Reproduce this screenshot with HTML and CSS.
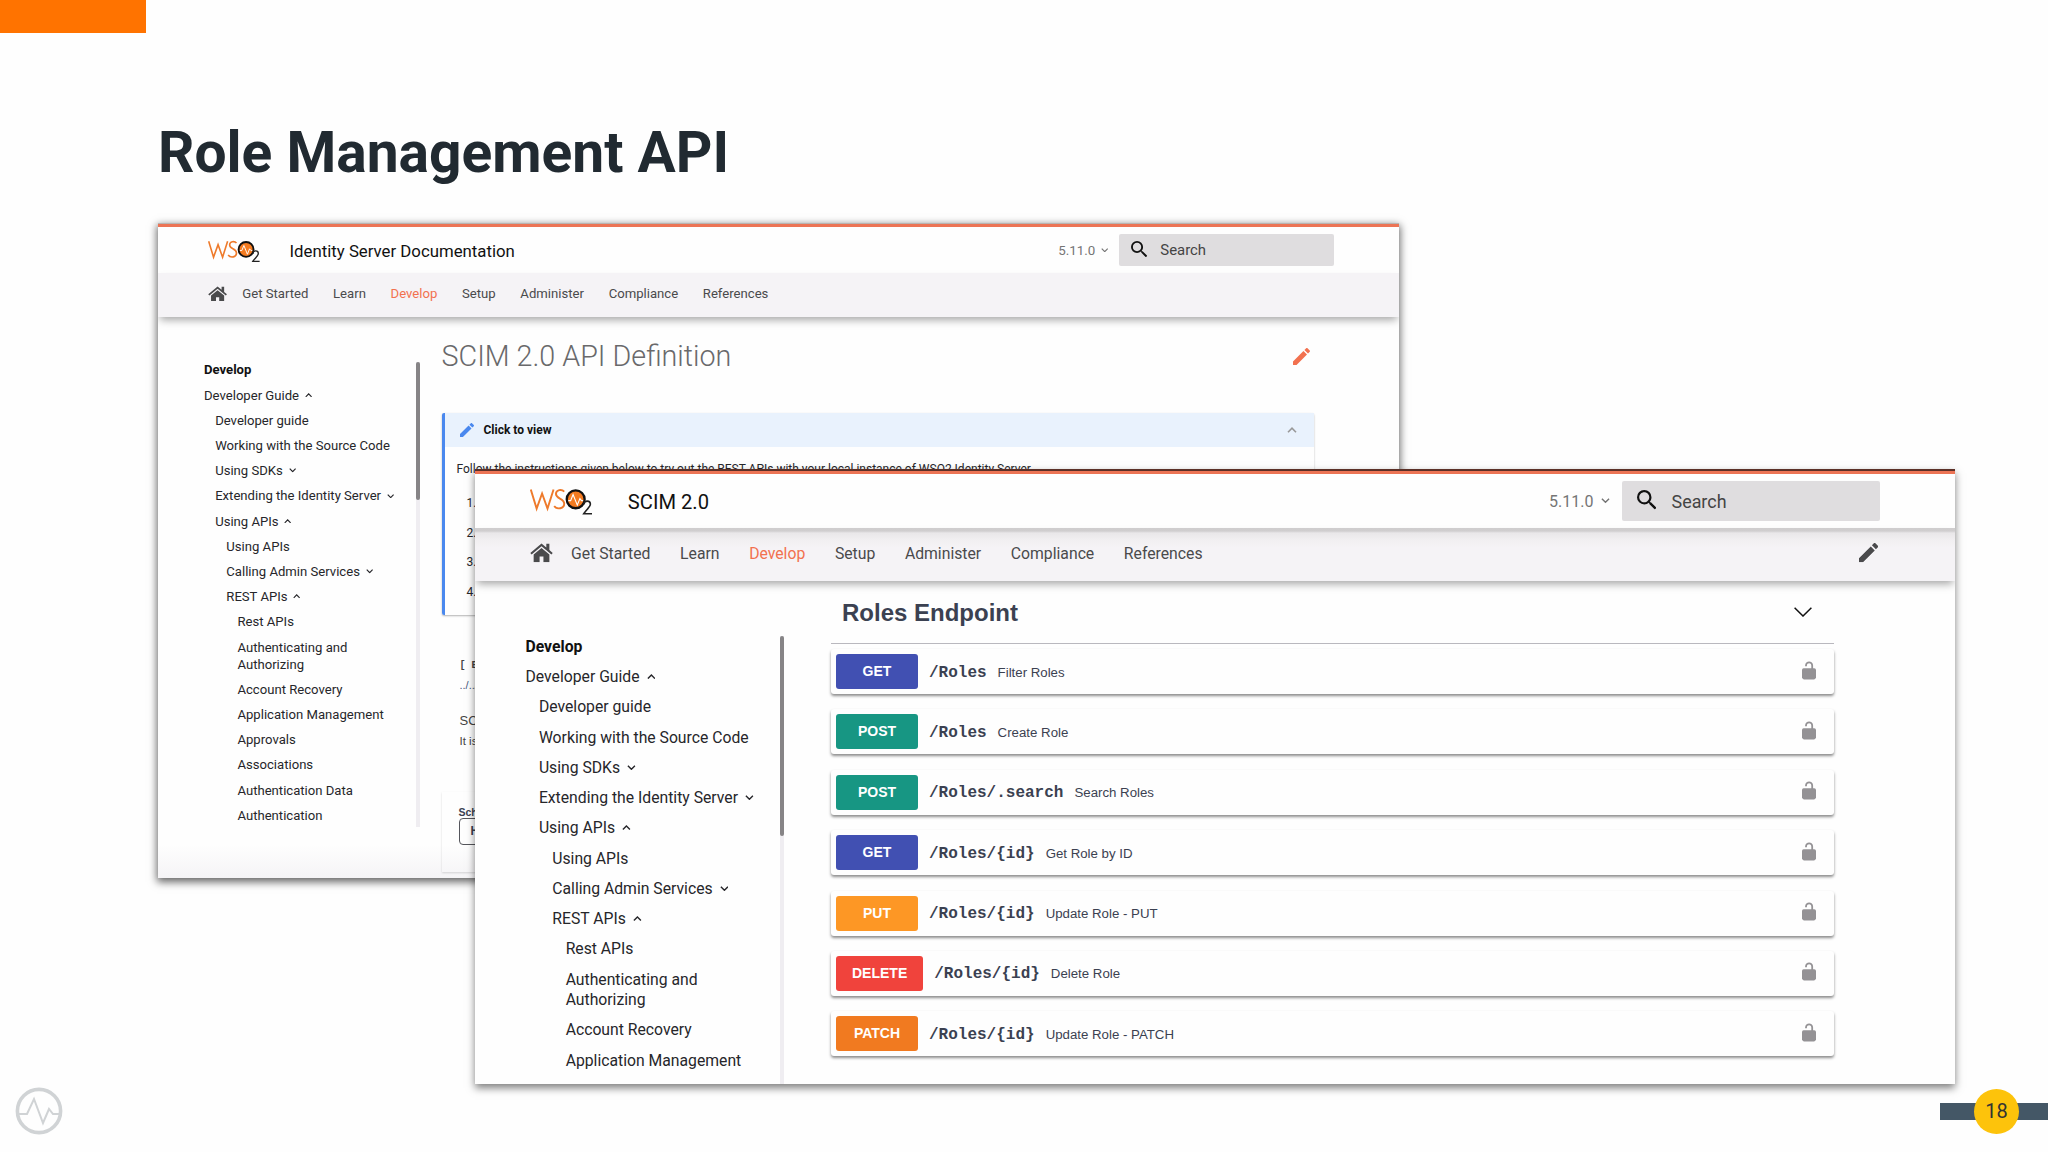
FILE: index.html
```html
<!DOCTYPE html>
<html lang="en">
<head>
    <meta charset="UTF-8">
    <title>Role Management API</title>
    <link rel="stylesheet" href="styles.css">
</head>
<body>
    <!-- shared icons -->
    <svg class="defs" width="0" height="0">
        <symbol id="logo" viewBox="0 0 62 27">
            <g fill="none" stroke="#ee7a2b" stroke-width="1.9">
                <path d="M0.8 1.5L6.6 20.5L12 5.5L17.4 20.5L23.4 1.5"/>
                <path d="M34 3.6C31.5 0.8 25.8 1.6 25.8 6C25.8 11 34 10 34 15.6C34 20.6 27 21.8 24 18"/>
            </g>
            <circle cx="45.4" cy="11.2" r="8.9" fill="#f47b20" stroke="#111" stroke-width="2.3"/>
            <path d="M38 12.5h2.4l2.4-6l4.2 10.5l2.6-6.5l1.6 2h1.6" fill="none" stroke="#fff" stroke-width="1.1"/>
            <path d="M53.6 16.2C54 11.8 60 12.2 60 16C60 19 56 21.5 53.4 25.6H61.6" fill="none" stroke="#222" stroke-width="1.6"/>
        </symbol>
        <symbol id="home" viewBox="0 0 24 20">
            <path d="M12 0.5L0.3 10.4L1.7 12L12 3.4L22.3 12L23.7 10.4L20.2 7.4V0.8H17V4.7Z"/>
            <path d="M12 5.2L3.8 12V20H10V14H14V20H20.2V12Z"/>
        </symbol>
        <symbol id="pencil" viewBox="3 3 18 18">
            <path d="M20.71 7.04c.39-.39.39-1.04 0-1.41l-2.34-2.34c-.37-.39-1.02-.39-1.41 0l-1.84 1.83 3.75 3.75M3 17.25V21h3.75L17.81 9.93l-3.75-3.75L3 17.25z"/>
        </symbol>
        <symbol id="magnifier" viewBox="3 3 17.5 17.5">
            <path d="M9.5 3A6.5 6.5 0 0 1 16 9.5c0 1.61-.59 3.09-1.56 4.23l.27.27h.79l5 5-1.5 1.5-5-5v-.79l-.27-.27A6.516 6.516 0 0 1 9.5 16 6.5 6.5 0 0 1 3 9.5 6.5 6.5 0 0 1 9.5 3m0 2C7 5 5 7 5 9.5S7 14 9.5 14 14 12 14 9.5 12 5 9.5 5z"/>
        </symbol>
        <symbol id="down" viewBox="0 0 10 6">
            <path d="M1 0.8L5 4.8L9 0.8" fill="none" stroke="currentColor" stroke-width="1.6"/>
        </symbol>
        <symbol id="up" viewBox="0 0 10 6">
            <path d="M1 5.2L5 1.2L9 5.2" fill="none" stroke="currentColor" stroke-width="1.6"/>
        </symbol>
        <symbol id="lock" viewBox="0 0 14 19">
            <path d="M2 7.3H9.3V4.6C9.3 1.6 4.9 1.6 4.9 4.6V5.2H3.1V4.4C3.1 -0.9 11.1 -0.9 11.1 4.4V7.3H12.2A1.8 1.8 0 0 1 14 9.1V17L12.2 18.6H1.8L0 17V9.1A1.8 1.8 0 0 1 2 7.3Z"/>
        </symbol>
    </svg>

    <div class="accent"></div>
    <h1 class="slide-title">Role Management API</h1>

    <div class="window window-back">
        <header class="topbar">
            <svg class="logo"><use href="#logo"/></svg>
            <span class="product">Identity Server Documentation</span>
            <span class="version">5.11.0 <svg class="chev"><use href="#down"/></svg></span>
            <div class="search"><svg><use href="#magnifier"/></svg><span>Search</span></div>
        </header>
        <nav class="tabs">
            <svg class="home"><use href="#home"/></svg>
            <a>Get Started</a><a>Learn</a><a class="active">Develop</a><a>Setup</a><a>Administer</a><a>Compliance</a><a>References</a>
        </nav>
        <div class="content">
            <ul class="sidebar">
                <li class="head">Develop</li>
                <li>Developer Guide <svg class="chev"><use href="#up"/></svg></li>
                <li class="l1">Developer guide</li>
                <li class="l1">Working with the Source Code</li>
                <li class="l1">Using SDKs <svg class="chev"><use href="#down"/></svg></li>
                <li class="l1">Extending the Identity Server <svg class="chev"><use href="#down"/></svg></li>
                <li class="l1">Using APIs <svg class="chev"><use href="#up"/></svg></li>
                <li class="l2">Using APIs</li>
                <li class="l2">Calling Admin Services <svg class="chev"><use href="#down"/></svg></li>
                <li class="l2">REST APIs <svg class="chev"><use href="#up"/></svg></li>
                <li class="l3">Rest APIs</li>
                <li class="l3">Authenticating and<br>Authorizing</li>
                <li class="l3">Account Recovery</li>
                <li class="l3">Application Management</li>
                <li class="l3">Approvals</li>
                <li class="l3">Associations</li>
                <li class="l3">Authentication Data</li>
                <li class="l3">Authentication</li>
            </ul>
            <div class="scrollbar"><div class="thumb"></div></div>
            <main class="article">
                <div class="article-head">
                    <h2>SCIM 2.0 API Definition</h2>
                    <svg class="pencil"><use href="#pencil"/></svg>
                </div>
                <div class="note">
                    <div class="note-title">
                        <svg class="pencil"><use href="#pencil"/></svg>
                        <span>Click to view</span>
                        <svg class="chev"><use href="#up"/></svg>
                    </div>
                    <p>Follow the instructions given below to try out the REST APIs with your local instance of WSO2 Identity Server.</p>
                    <ol>
                        <li>1.</li>
                        <li>2.</li>
                        <li>3.</li>
                        <li>4.</li>
                    </ol>
                </div>
                <div class="swagger-info">
                    <pre class="base-url">[ B</pre>
                    <a class="spec-link">../../</a>
                    <p>SC</p>
                    <p class="small">It is</p>
                </div>
                <div class="schemes">
                    <span>Sch</span>
                    <div class="select">H</div>
                </div>
            </main>
        </div>
    </div>

    <div class="window window-front">
        <header class="topbar">
            <svg class="logo"><use href="#logo"/></svg>
            <span class="product">SCIM 2.0</span>
            <span class="version">5.11.0 <svg class="chev"><use href="#down"/></svg></span>
            <div class="search"><svg><use href="#magnifier"/></svg><span>Search</span></div>
        </header>
        <nav class="tabs">
            <svg class="home"><use href="#home"/></svg>
            <a>Get Started</a><a>Learn</a><a class="active">Develop</a><a>Setup</a><a>Administer</a><a>Compliance</a><a>References</a>
            <svg class="pencil"><use href="#pencil"/></svg>
        </nav>
        <div class="content">
            <ul class="sidebar">
                <li class="head">Develop</li>
                <li>Developer Guide <svg class="chev"><use href="#up"/></svg></li>
                <li class="l1">Developer guide</li>
                <li class="l1">Working with the Source Code</li>
                <li class="l1">Using SDKs <svg class="chev"><use href="#down"/></svg></li>
                <li class="l1">Extending the Identity Server <svg class="chev"><use href="#down"/></svg></li>
                <li class="l1">Using APIs <svg class="chev"><use href="#up"/></svg></li>
                <li class="l2">Using APIs</li>
                <li class="l2">Calling Admin Services <svg class="chev"><use href="#down"/></svg></li>
                <li class="l2">REST APIs <svg class="chev"><use href="#up"/></svg></li>
                <li class="l3">Rest APIs</li>
                <li class="l3">Authenticating and<br>Authorizing</li>
                <li class="l3">Account Recovery</li>
                <li class="l3">Application Management</li>
                <li class="l3">Approvals</li>
            </ul>
            <div class="scrollbar"><div class="thumb"></div></div>
            <main class="endpoints">
                <div class="endpoints-head">
                    <h3>Roles Endpoint</h3>
                    <svg width="18" height="10"><path d="M0.6 0.7L9 9L17.4 0.7" fill="none" stroke="#111" stroke-width="1.5"/></svg>
                </div>
                <div class="op"><b class="get">GET</b><code>/Roles</code><span>Filter Roles</span><svg class="lock"><use href="#lock"/></svg></div>
                <div class="op"><b class="post">POST</b><code>/Roles</code><span>Create Role</span><svg class="lock"><use href="#lock"/></svg></div>
                <div class="op"><b class="post">POST</b><code>/Roles/.search</code><span>Search Roles</span><svg class="lock"><use href="#lock"/></svg></div>
                <div class="op"><b class="get">GET</b><code>/Roles/{id}</code><span>Get Role by ID</span><svg class="lock"><use href="#lock"/></svg></div>
                <div class="op"><b class="put">PUT</b><code>/Roles/{id}</code><span>Update Role - PUT</span><svg class="lock"><use href="#lock"/></svg></div>
                <div class="op"><b class="delete">DELETE</b><code>/Roles/{id}</code><span>Delete Role</span><svg class="lock"><use href="#lock"/></svg></div>
                <div class="op"><b class="patch">PATCH</b><code>/Roles/{id}</code><span>Update Role - PATCH</span><svg class="lock"><use href="#lock"/></svg></div>
            </main>
        </div>
    </div>

    <svg class="brand" viewBox="0 0 48 48">
        <circle cx="24" cy="24" r="21.6"/>
        <path d="M4 27H12L19 12L28 36L34 22L38 27H44"/>
    </svg>
    <div class="page-bar"><span class="page-number">18</span></div>
</body>
</html>
```
FILE: styles.css
```css
* {
    box-sizing: border-box;
}

body {
    margin: 0;
    width: 2048px;
    height: 1152px;
    position: relative;
    overflow: hidden;
    background: #fefefe;
    font-family: Roboto, "Liberation Sans", sans-serif;
    color: #26262a;
}

h1, h2, h3, p, ul, ol, pre {
    margin: 0;
    padding: 0;
    list-style: none;
}

svg {
    fill: currentColor;
    flex: none;
}

.defs {
    position: absolute;
}

.accent {
    width: 146px;
    height: 32.5px;
    background: #ff7300;
}

.slide-title {
    margin: 87px 0 0 158px;
    font-size: 56.9px;
    line-height: 66px;
    font-weight: 700;
    color: #212a31;
}

/* windows: most inner sizes are in em, so both share the same rules */
.window {
    position: absolute;
    display: flex;
    flex-direction: column;
    overflow: hidden;
    background: #fefefe;
}

.window-back {
    left: 158px;
    top: 223px;
    width: 1241px;
    height: 655px;
    font-size: 13.33px;
    border-top: 1px solid #b9b3b0;
    box-shadow: 0 3px 8px 1px rgba(0, 0, 0, 0.6);
}

.window-front {
    left: 475px;
    top: 469px;
    width: 1480px;
    height: 615px;
    font-size: 16px;
    border-top: 2px solid #5b3027;
    box-shadow: 0 4px 8px 0 rgba(0, 0, 0, 0.5);
}

.topbar {
    flex: none;
    display: flex;
    align-items: center;
    border-top: 3px solid #ec7455;
}

.window-back .topbar {
    height: 49px;
    padding: 0 65px 0 50px;
}

.window-front .topbar {
    height: 57px;
    padding: 0 75px 0 55px;
}

.logo {
    width: 3.9em;
    height: 1.7em;
    margin-top: 2px;
}

.product {
    margin: 2px 0 0 1.76em;
    font-size: 1.26em;
    color: #111;
}

.version {
    margin-left: auto;
    color: #757575;
}

.chev {
    width: 0.56em;
    height: 0.34em;
    margin-left: 0.2em;
    vertical-align: 0.17em;
}

.search {
    display: flex;
    align-items: center;
    width: 16.1em;
    height: 2.44em;
    margin-left: 0.8em;
    padding-left: 0.9em;
    background: #dfdddf;
    border-radius: 2px;
    color: #444;
}

.search svg {
    width: 1.22em;
    height: 1.22em;
    margin: -0.1em 0.95em 0 0;
    color: #111;
}

.search span {
    font-size: 1.12em;
}

.tabs {
    flex: none;
    display: flex;
    align-items: center;
    background: #f5f3f6;
    color: #4a4a4c;
    box-shadow: 0 5px 8px -2px rgba(0, 0, 0, 0.35);
    position: relative;
}

.tabs a {
    font-size: 0.985em;
}

.tabs a + a {
    margin-left: 1.88em;
}

.tabs .active {
    color: #f2714f;
}

.window-back .tabs {
    height: 44px;
    padding: 0 50px 3px;
}

.window-front .tabs {
    height: 53px;
    padding: 0 77px 3px 55px;
    background: linear-gradient(#cfcdce 0, #d0cecf 3px, #e9e7e9 5px, #f1eff1 12px, #f5f3f6 20px);
}

.home {
    width: 1.44em;
    height: 1.2em;
    margin-right: 1.13em;
}

.pencil {
    width: 1.2em;
    height: 1.2em;
    margin-left: auto;
}

.content {
    flex: 1;
    display: flex;
    min-height: 0;
    overflow: hidden;
}

.window-back .content {
    background: linear-gradient(transparent 94%, #f5f4f6);
}

.sidebar {
    flex: none;
    line-height: 1.3em;
    font-size: 0.984em;
}

.sidebar li {
    margin-bottom: 0.623em;
    white-space: nowrap;
}

.sidebar .head {
    font-weight: 700;
    color: #111;
}

.sidebar .l1 {
    padding-left: 0.85em;
}

.sidebar .l2 {
    padding-left: 1.7em;
}

.sidebar .l3 {
    padding-left: 2.55em;
}

.window-back .sidebar {
    width: 258px;
    padding: 44.3px 0 0 46px;
}

.window-front .sidebar {
    width: 305px;
    padding: 55.8px 0 0 50.5px;
}

.scrollbar {
    flex: none;
    background: #efedf1;
}

.thumb {
    background: #868486;
    border-radius: 2px;
}

.window-back .scrollbar {
    width: 4px;
    height: 465px;
    margin-top: 45px;
}

.window-back .thumb {
    height: 138px;
}

.window-front .scrollbar {
    width: 4px;
    margin-top: 55px;
}

.window-front .thumb {
    height: 200px;
}

/* back window article */
.article {
    width: 872px;
    margin-left: 21.5px;
}

.article-head {
    display: flex;
    align-items: center;
    height: 78px;
    margin-bottom: 18px;
    padding-right: 4px;
}

.article-head h2 {
    font-size: 28.7px;
    font-weight: 300;
    color: #69696b;
}

.article-head .pencil {
    width: 17px;
    height: 17px;
    color: #f2714f;
}

.note {
    height: 202px;
    font-size: 12px;
    border-left: 3px solid #4a88ee;
    border-radius: 2px;
    box-shadow: 0 1px 2px rgba(0, 0, 0, 0.3);
}

.note-title {
    display: flex;
    align-items: center;
    height: 34px;
    padding: 0 17px 0 15px;
    background: #e9f2fd;
    font-weight: 700;
    color: #111;
}

.note-title .pencil {
    width: 14px;
    height: 14px;
    margin: 0 10px 0 0;
    color: #4a88ee;
}

.note-title .chev {
    width: 10px;
    height: 6px;
    margin-left: auto;
    color: #999;
}

.note p {
    padding: 14px 0 0 12px;
    line-height: 16px;
}

.note ol {
    padding: 12px 0 0 22px;
    line-height: 29.5px;
}

.swagger-info {
    padding: 43px 0 0 18px;
    color: #444;
}

.base-url {
    font: bold 10px/16px "Liberation Mono", monospace;
}

.spec-link {
    display: block;
    font: 11px/22px "Liberation Sans", sans-serif;
    color: #4a5a80;
}

.swagger-info p {
    margin-top: 16px;
    font: 13px/18px "Liberation Sans", sans-serif;
}

.swagger-info .small {
    margin-top: 2px;
    font-size: 11.5px;
}

.schemes {
    height: 80px;
    margin-top: 42px;
    padding: 14px 0 0 17px;
    font: bold 10.5px/12px "Liberation Sans", sans-serif;
    color: #3b4151;
    box-shadow: 0 1px 2px rgba(0, 0, 0, 0.15);
}

.select {
    width: 110px;
    height: 27px;
    padding: 6px 11px;
    border: 1.5px solid #55565c;
    border-radius: 4px;
    font-size: 12px;
}

/* front window endpoints */
.endpoints {
    width: 1003px;
    margin-left: 47px;
    font-family: "Liberation Sans", sans-serif;
    color: #3b4151;
}

.endpoints-head {
    display: flex;
    align-items: center;
    justify-content: space-between;
    height: 63px;
    margin-bottom: 5px;
    padding: 1px 22px 0 11px;
    border-bottom: 1px solid #b9b8be;
}

.endpoints-head h3 {
    margin-top: 1px;
    font-size: 24px;
}

.endpoints-head svg {
    margin-top: -2px;
}

.op {
    display: flex;
    align-items: center;
    height: 45px;
    margin-bottom: 15.4px;
    padding: 0 18px 0 5px;
    border-radius: 3px;
    box-shadow: 0 2px 3px rgba(0, 0, 0, 0.45);
}

.op b {
    min-width: 82px;
    padding: 0 16px;
    margin-right: 11px;
    border-radius: 3px;
    color: #fff;
    font-size: 14px;
    line-height: 35px;
    text-align: center;
}

.op code {
    margin: 2px 11px 0 0;
    font: bold 16px "Liberation Mono", monospace;
}

.op span {
    margin-top: 1px;
    font-size: 13.25px;
}

.op .lock {
    width: 14px;
    height: 19px;
    margin: -3px 0 0 auto;
    color: #949295;
}

.get {
    background: #4150b2;
}

.post {
    background: #179683;
}

.put {
    background: #fd9725;
}

.delete {
    background: #f0433c;
}

.patch {
    background: #f17a20;
}

/* slide footer */
.brand {
    position: absolute;
    left: 15px;
    top: 1087px;
    width: 48px;
    height: 48px;
    fill: none;
    stroke: #d0d3d5;
    stroke-width: 3.6;
}

.brand path {
    stroke-width: 2;
}

.page-bar {
    position: absolute;
    left: 1940px;
    top: 1103px;
    width: 108px;
    height: 17px;
    padding-left: 34px;
    display: flex;
    align-items: center;
    background: #445766;
}

.page-number {
    width: 45px;
    height: 45px;
    border-radius: 50%;
    background: #fdc30b;
    color: #333;
    font-size: 20px;
    line-height: 45px;
    text-align: center;
}
```
